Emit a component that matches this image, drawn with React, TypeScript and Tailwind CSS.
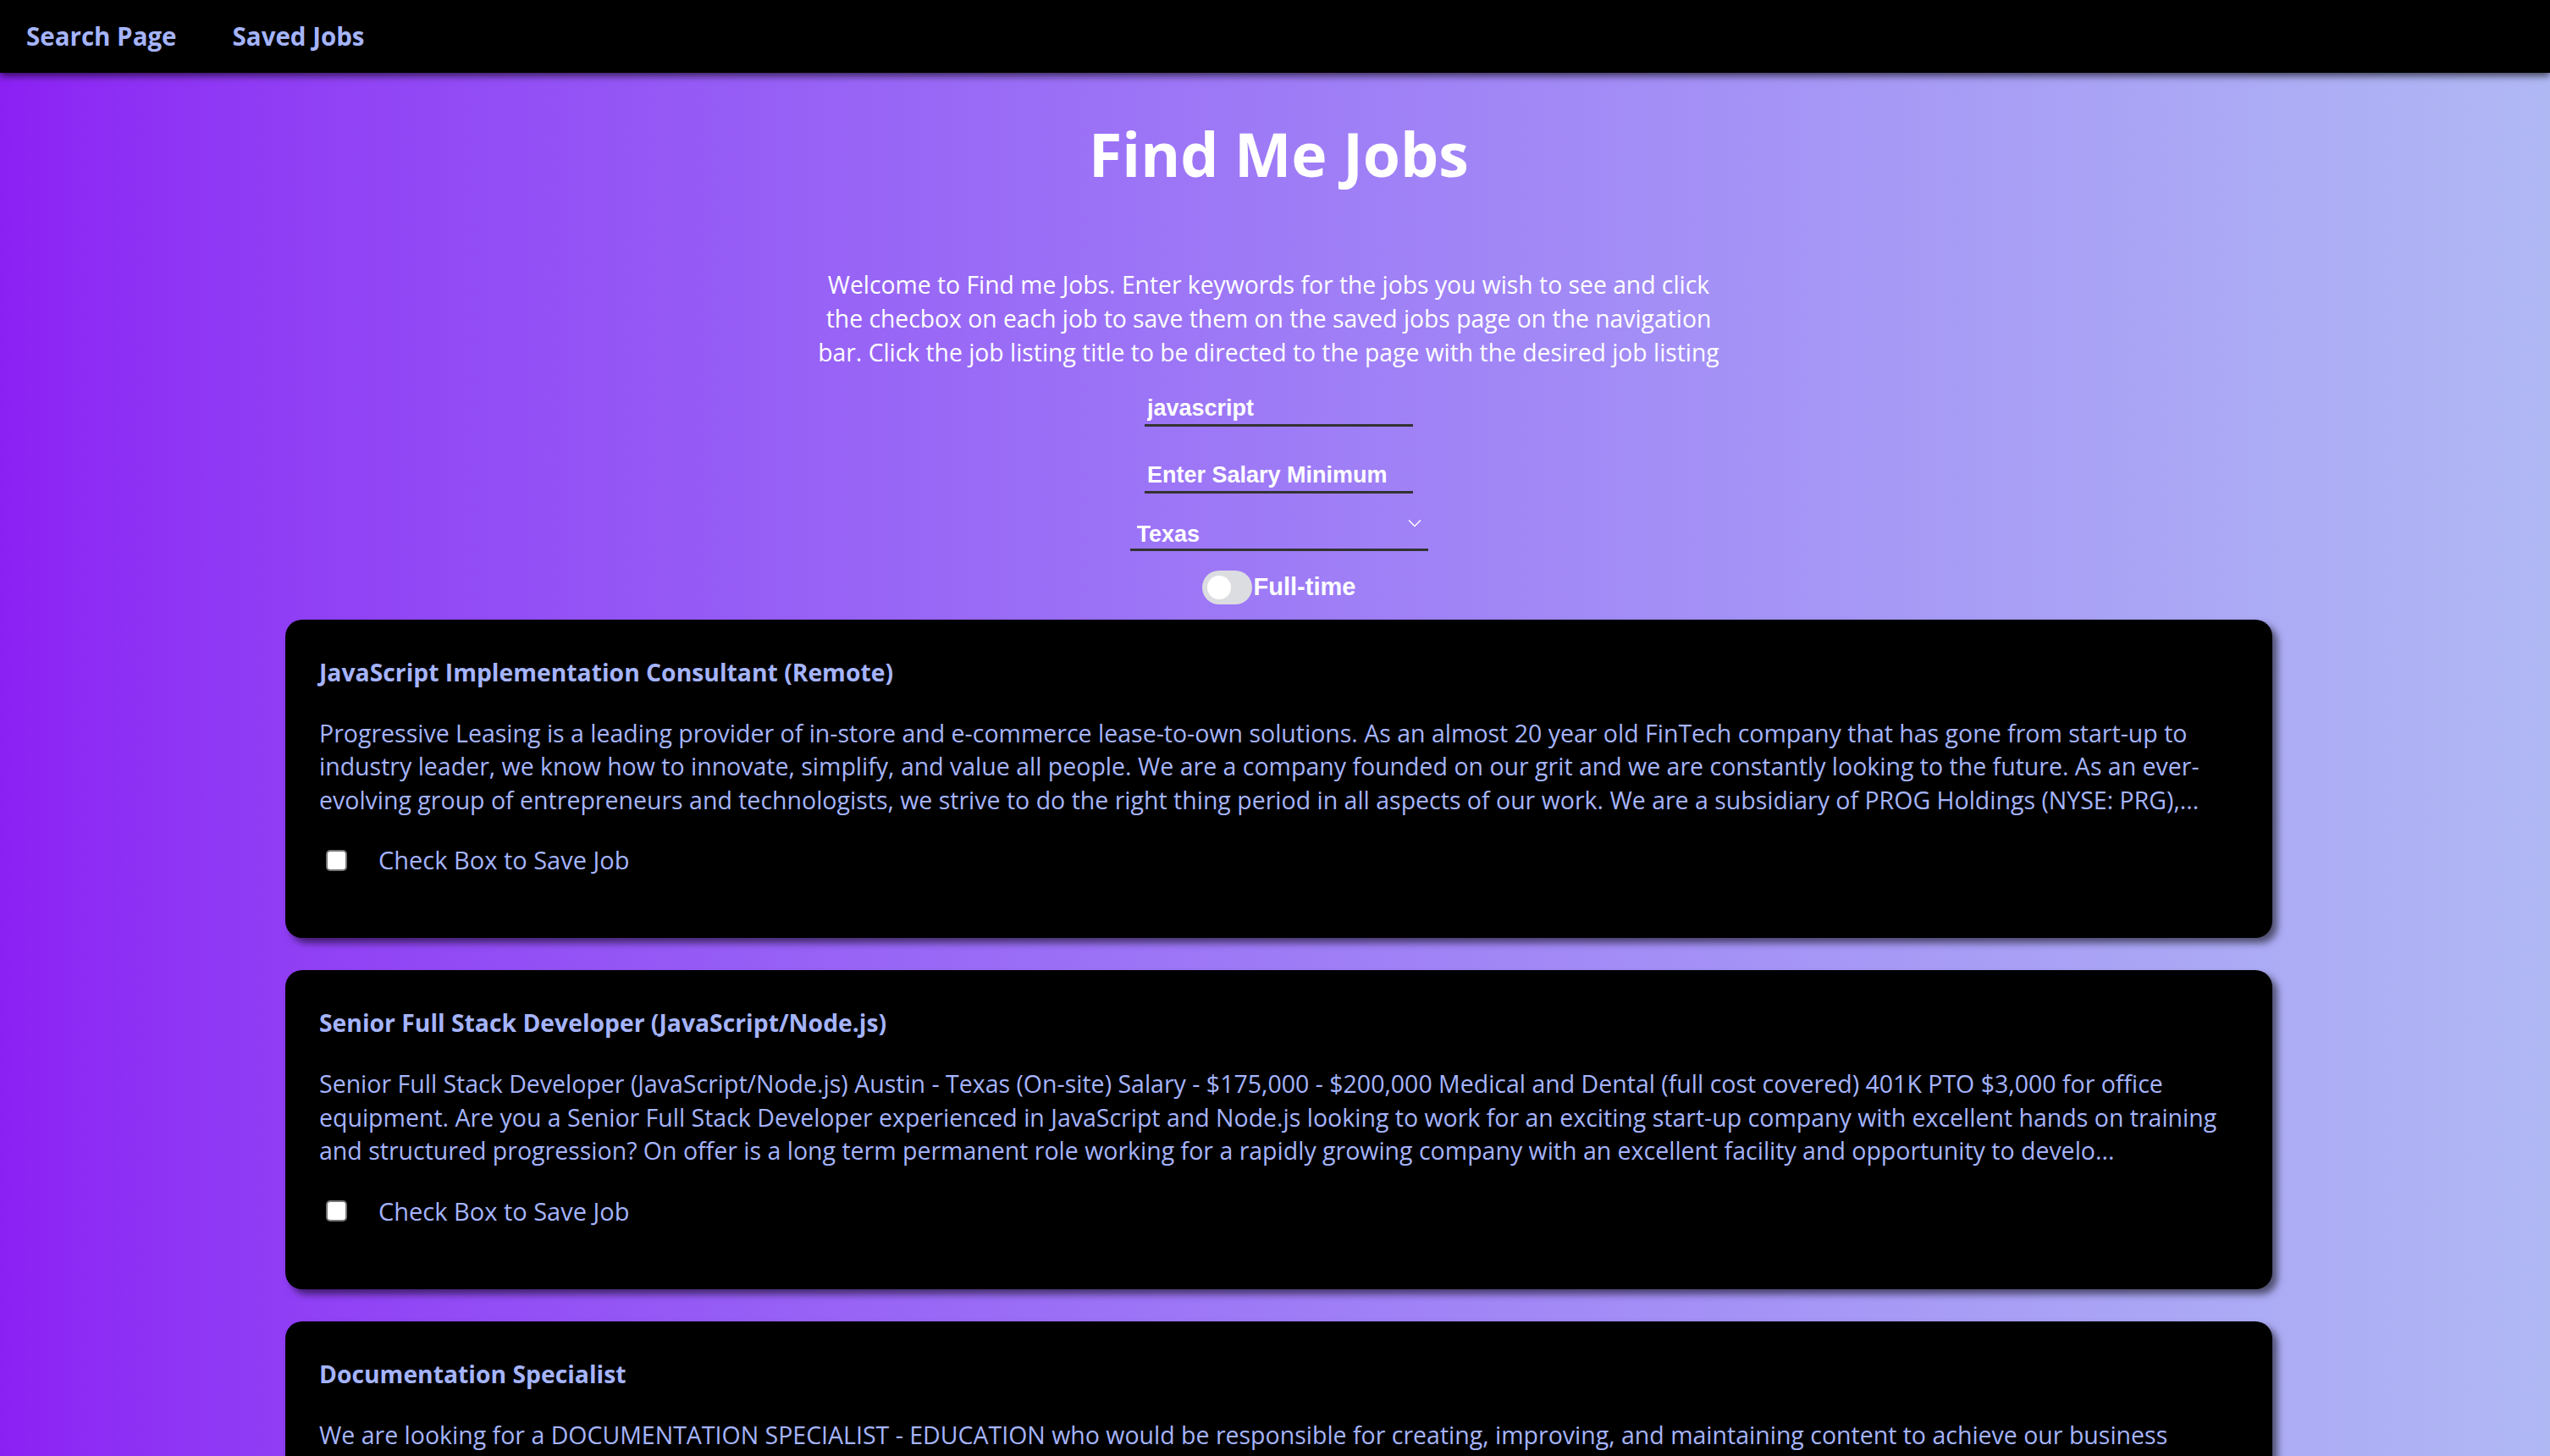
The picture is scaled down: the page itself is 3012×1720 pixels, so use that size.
import React from "react";

const jobs = [
	{
		title: "JavaScript Implementation Consultant (Remote)",
		description:
			"Progressive Leasing is a leading provider of in-store and e-commerce lease-to-own solutions. As an almost 20 year old FinTech company that has gone from start-up to industry leader, we know how to innovate, simplify, and value all people. We are a company founded on our grit and we are constantly looking to the future. As an ever-evolving group of entrepreneurs and technologists, we strive to do the right thing period in all aspects of our work. We are a subsidiary of PROG Holdings (NYSE: PRG),...",
	},
	{
		title: "Senior Full Stack Developer (JavaScript/Node.js)",
		description:
			"Senior Full Stack Developer (JavaScript/Node.js) Austin - Texas (On-site) Salary - $175,000 - $200,000 Medical and Dental (full cost covered) 401K PTO $3,000 for office equipment. Are you a Senior Full Stack Developer experienced in JavaScript and Node.js looking to work for an exciting start-up company with excellent hands on training and structured progression? On offer is a long term permanent role working for a rapidly growing company with an excellent facility and opportunity to develo...",
	},
	{
		title: "Documentation Specialist",
		description:
			"We are looking for a DOCUMENTATION SPECIALIST - EDUCATION who would be responsible for creating, improving, and maintaining content to achieve our business goals. The role includes writing user guides, tutorials and reference material for our products and working closely with the engineering teams...",
	},
];

const JobCard = ({ title, description }: { title: string; description: string }) => {
	return (
		<div className="w-[2347px] rounded-[20px] bg-black px-[40px] pt-[42px] pb-[72px] text-[#a5b4fc] shadow-[6px_6px_8px_rgba(0,0,0,0.55)]">
			<a href="#" className="block text-[28.3px] leading-[40px] font-bold">
				{title}
			</a>
			<p className="mt-[33px] text-[28.5px] leading-[39.5px]">{description}</p>
			<div className="mt-[31px] flex h-[40px] items-center">
				<input
					type="checkbox"
					className="ml-[8px] h-[25px] w-[25px] appearance-none rounded-[5px] border-2 border-[#767676] bg-white"
				/>
				<span className="ml-[37px] text-[29px]">Check Box to Save Job</span>
			</div>
		</div>
	);
};

const App = () => {
	return (
		<div className="min-h-screen bg-linear-to-r from-[#8c20f4] to-[#b0b8f4] pb-[80px] font-['Open_Sans',sans-serif]">
			<nav className="relative z-10 flex h-[86px] items-center gap-[66px] bg-black px-[31px] shadow-[0_4px_8px_rgba(0,0,0,0.6)]">
				<a href="#" className="text-[29.5px] font-bold text-[#a5b4fc]">
					Search Page
				</a>
				<a href="#" className="text-[29.5px] font-bold text-[#a5b4fc]">
					Saved Jobs
				</a>
			</nav>

			<main className="flex flex-col items-center pl-[9px]">
				<h1 className="mt-[54px] text-[71.5px] leading-[84px] font-bold text-white">
					Find Me Jobs
				</h1>
				<p className="mt-[92px] mr-[24px] w-[1080px] text-center text-[28.3px] leading-[40px] text-white">
					Welcome to Find me Jobs. Enter keywords for the jobs you wish
					to see and click the checbox on each job to save them on the
					saved jobs page on the navigation bar. Click the job listing
					title to be directed to the page with the desired job listing
				</p>

				<form className="mt-[28px] flex flex-col items-center font-['Liberation_Sans',Arial,sans-serif] font-bold text-white">
					<input
						type="text"
						defaultValue="javascript"
						className="h-[40px] w-[317px] border-b-[3px] border-[#333] bg-transparent px-[3px] text-[27px] outline-none"
					/>
					<input
						type="text"
						placeholder="Enter Salary Minimum"
						className="mt-[39px] h-[40px] w-[317px] border-b-[3px] border-[#333] bg-transparent px-[3px] text-[27px] outline-none placeholder:text-white"
					/>
					<div className="relative mt-[28px] w-[352px]">
						<select className="h-[40px] w-full appearance-none border-b-[3px] border-[#333] bg-transparent px-[8px] text-[27px] outline-none">
							<option className="text-black">Texas</option>
							<option className="text-black">California</option>
							<option className="text-black">New York</option>
						</select>
						<svg
							viewBox="0 0 16 10"
							className="pointer-events-none absolute top-[2px] right-[8px] h-[10px] w-[16px]"
							fill="none"
							stroke="white"
							strokeWidth="1.4"
						>
							<path d="M1 1.5 8 8.5 15 1.5" />
						</svg>
					</div>
					<label className="mt-[21px] flex items-center gap-[2px]">
						<span className="flex h-[40px] w-[59px] items-center rounded-full bg-[#dcdde0] pl-[6px]">
							<span className="h-[28px] w-[28px] rounded-full bg-white" />
						</span>
						<span className="text-[29px]">Full-time</span>
					</label>
				</form>

				<div className="mt-[16px] flex w-full flex-col items-center gap-[38px]">
					{jobs.map((job, index) => (
						<JobCard key={index} title={job.title} description={job.description} />
					))}
				</div>
			</main>
		</div>
	);
};

export default App;
